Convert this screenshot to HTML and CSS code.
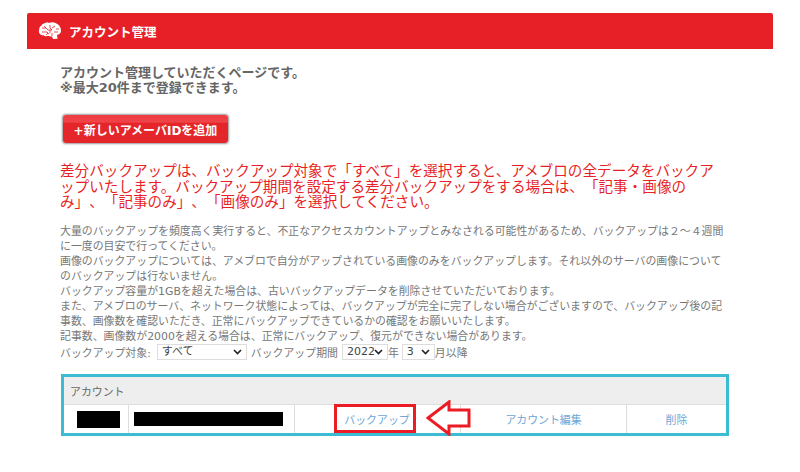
FILE: index.html
```html
<!DOCTYPE html>
<html lang="ja">
<head>
<meta charset="utf-8">
<title>アカウント管理</title>
<link rel="stylesheet" href="styles.css">
</head>
<body>
<header class="head">
  <svg class="brain" width="24" height="18" viewBox="0 0 24 18">
    <path fill="#fff" d="M6 1.500C8 .2 10 .6 11 1c2-1 5-1 7 .2 2.400 1 4 2.800 4.600 5 .6 2.200.6 4-.6 5.300-.8.900-2 1.300-3 1.300l.6 4-4.600.2-1-2.500c-1.500.3-3 0-4-.7-1.500.8-3.500.5-4.500-.5C4 13.500 2.800 13 2 12 .6 10.800.6 8.800 1.300 7.600 1 5.800 2 4.200 3.300 3.700 3.800 2.600 4.800 1.800 6 1.500Z"/>
    <path fill="none" stroke="#e71f26" stroke-width=".8" d="M4 6h4l2 2h4M6 4l2 2M12 3v3l2 2M17 4l-3 2M18 7h3M16 10h4M4 10h5l2 2M8 13l2-2M14 11v3M12 8v3"/>
  </svg>
  <span class="head-title">アカウント管理</span>
</header>
<main class="content">
  <p class="intro">アカウント管理していただくページです。<br>※最大20件まで登録できます。</p>
  <button class="add-btn" type="button">+新しいアメーバIDを追加</button>
  <p class="alert">差分バックアップは、バックアップ対象で「すべて」を選択すると、アメブロの全データをバックアップいたします。バックアップ期間を設定する差分バックアップをする場合は、「記事・画像のみ」、「記事のみ」、「画像のみ」を選択してください。</p>
  <p class="notes">大量のバックアップを頻度高く実行すると、不正なアクセスカウントアップとみなされる可能性があるため、バックアップは２～４週間に一度の目安で行ってください。<br>画像のバックアップについては、アメブロで自分がアップされている画像のみをバックアップします。それ以外のサーバの画像についてのバックアップは行ないません。<br>バックアップ容量が1GBを超えた場合は、古いバックアップデータを削除させていただいております。<br>また、アメブロのサーバ、ネットワーク状態によっては、バックアップが完全に完了しない場合がございますので、バックアップ後の記事数、画像数を確認いただき、正常にバックアップできているかの確認をお願いいたします。<br>記事数、画像数が2000を超える場合は、正常にバックアップ、復元ができない場合があります。</p>
  <form class="filters">
    <span>バックアップ対象:</span>
    <select class="sel sel-target"><option>すべて</option></select>
    <span>バックアップ期間</span>
    <select class="sel sel-year"><option>2022</option></select>
    <span>年</span>
    <select class="sel sel-month"><option>3</option></select>
    <span>月以降</span>
  </form>
  <section class="accounts">
    <div class="acc-head">アカウント</div>
    <div class="acc-row">
      <div class="cell c-id"><span class="mask mask-id"></span></div>
      <div class="cell c-name"><span class="mask mask-name"></span></div>
      <div class="cell c-backup"><a class="link hl" href="#">バックアップ</a>
        <svg class="arrow" width="46" height="36" viewBox="0 0 46 36"><path d="M2 18 23 2v8h20v16H23v8Z" fill="#fff" stroke="#ec1c24" stroke-width="3"/></svg>
      </div>
      <div class="cell c-edit"><a class="link" href="#">アカウント編集</a></div>
      <div class="cell c-del"><a class="link" href="#">削除</a></div>
    </div>
  </section>
</main>
</body>
</html>
```
FILE: styles.css
```css
html, body { margin: 0; padding: 0; background: #fff; }
body {
  width: 800px;
  height: 472px;
  overflow: hidden;
  padding-top: 13px;
  box-sizing: border-box;
  font-family: "DejaVu Sans", "Noto Sans CJK JP", sans-serif;
  color: #666;
  text-spacing-trim: space-all;
}
p { margin: 0; }
.head {
  margin-left: 27px;
  width: 746px;
  height: 36px;
  background: #e71f26;
  border-radius: 2px 2px 0 0;
  display: flex;
  align-items: center;
  padding-left: 11px;
  box-sizing: border-box;
  gap: 7px;
}
.head-title { color: #fff; font-size: 12.500px; font-weight: 700; }
.content { padding: 16px 72px 0 60px; }
.intro { font-size: 13px; font-weight: 700; line-height: 15px; color: #666; }
.add-btn {
  display: block;
  margin: 20px 0 0 3px;
  width: 165px;
  height: 28px;
  padding: 0;
  border: 0;
  border-radius: 3px;
  background: linear-gradient(#ee3b40 0, #ef4449 25%, #e4262b 30%, #e4262b 100%);
  box-shadow: 0 0 2px 1px #999;
  color: #fff;
  font: 700 12px "DejaVu Sans", "Noto Sans CJK JP", sans-serif;
}
.alert { margin-top: 20px; font-size: 14.600px; line-height: 15.500px; color: #e71f26; width: 660px; }
.notes { margin-top: 14px; font-size: 10.900px; line-height: 15.100px; color: #777; width: 668px; }
.filters { display: flex; align-items: center; height: 16px; font-size: 10.900px; color: #777; }
.sel {
  appearance: none;
  height: 16px;
  padding: 0 0 0 4px;
  font: 11px/14px "DejaVu Sans", "Noto Sans CJK JP", sans-serif;
  color: #444;
  background-color: #fff;
  background-image: url("data:image/svg+xml,%3Csvg xmlns='http://www.w3.org/2000/svg' width='9' height='6'%3E%3Cpath d='M1 1l3.500 3.500L8 1' fill='none' stroke='%23222' stroke-width='1.600'/%3E%3C/svg%3E");
  background-repeat: no-repeat;
  background-position: right 4px center;
  border: 1px solid #ddd;
  box-sizing: border-box;
}
.sel-target { width: 90px; margin: 0 4px 0 6px; }
.sel-year { width: 46px; margin: 0 0 0 4px; }
.sel-month { width: 33px; margin: 0 0 0 3px; }
.accounts {
  margin-top: 14px;
  border: 3px solid #3bbcd3;
  width: 668px;
  margin-left: 1px;
  box-sizing: border-box;
}
.acc-head {
  height: 28px;
  background: #eee;
  border-bottom: 1px solid #ddd;
  display: flex;
  align-items: center;
  padding-left: 6px;
  font-size: 10.900px;
  color: #666;
  box-sizing: border-box;
}
.acc-row { display: flex; height: 28px; }
.cell {
  display: flex;
  align-items: center;
  justify-content: center;
  border-right: 1px solid #ddd;
  box-sizing: border-box;
  font-size: 10.900px;
  position: relative;
}
.c-id { width: 65px; justify-content: flex-start; padding-left: 13px; }
.c-name { width: 166px; justify-content: flex-start; padding-left: 5px; }
.c-backup { width: 166px; padding-right: 5px; }
.c-edit { width: 166px; }
.c-del { width: 99px; border-right: 0; }
.mask { display: block; background: #000; }
.mask-id { width: 43px; height: 17px; }
.mask-name { width: 149px; height: 14px; }
.link { color: #6ba7d6; text-decoration: none; }
.hl { outline: 3px solid #ec1c24; padding: 7px 3.500px 3px 7.500px; line-height: 13px; margin-bottom: 2px; }
.arrow { position: absolute; left: 131px; top: -5px; }
```
